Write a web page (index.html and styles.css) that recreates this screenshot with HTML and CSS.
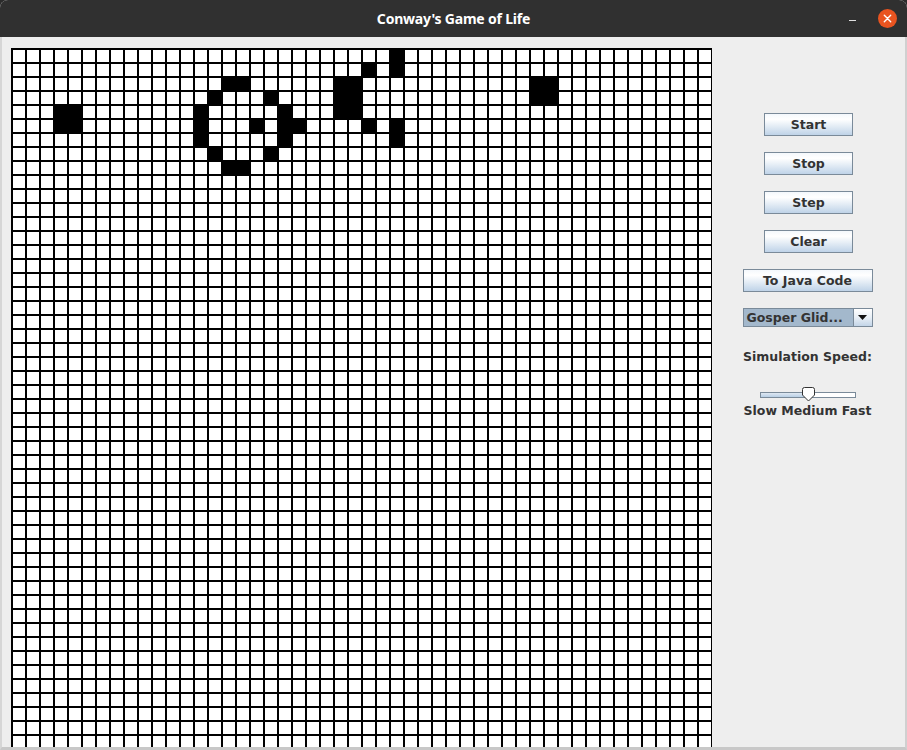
FILE: index.html
```html
<!DOCTYPE html>
<html>
<head>
<meta charset="utf-8">
<link rel="stylesheet" href="styles.css">
</head>
<body>
<div class="window">
  <div class="titlebar">
    <span class="title">Conway's Game of Life</span>
    <div class="controls">
      <span class="minimize"></span>
      <span class="close">
        <svg width="19" height="19" viewBox="0 0 19 19"><circle cx="9.5" cy="9.5" r="9.5" fill="#e95420"/><path d="M6.3 6.3 L12.7 12.7 M12.7 6.3 L6.3 12.7" stroke="#fff" stroke-width="1.4" stroke-linecap="round"/></svg>
      </span>
    </div>
  </div>
  <div class="content">
    <div class="board-wrap">
      <div class="board">
        <div class="cell" style="grid-area:5/4"></div>
        <div class="cell" style="grid-area:5/5"></div>
        <div class="cell" style="grid-area:6/4"></div>
        <div class="cell" style="grid-area:6/5"></div>

        <div class="cell" style="grid-area:5/14"></div>
        <div class="cell" style="grid-area:6/14"></div>
        <div class="cell" style="grid-area:7/14"></div>
        <div class="cell" style="grid-area:4/15"></div>
        <div class="cell" style="grid-area:8/15"></div>
        <div class="cell" style="grid-area:3/16"></div>
        <div class="cell" style="grid-area:9/16"></div>
        <div class="cell" style="grid-area:3/17"></div>
        <div class="cell" style="grid-area:9/17"></div>
        <div class="cell" style="grid-area:6/18"></div>
        <div class="cell" style="grid-area:4/19"></div>
        <div class="cell" style="grid-area:8/19"></div>
        <div class="cell" style="grid-area:5/20"></div>
        <div class="cell" style="grid-area:6/20"></div>
        <div class="cell" style="grid-area:7/20"></div>
        <div class="cell" style="grid-area:6/21"></div>

        <div class="cell" style="grid-area:3/24"></div>
        <div class="cell" style="grid-area:4/24"></div>
        <div class="cell" style="grid-area:5/24"></div>
        <div class="cell" style="grid-area:3/25"></div>
        <div class="cell" style="grid-area:4/25"></div>
        <div class="cell" style="grid-area:5/25"></div>
        <div class="cell" style="grid-area:2/26"></div>
        <div class="cell" style="grid-area:6/26"></div>
        <div class="cell" style="grid-area:1/28"></div>
        <div class="cell" style="grid-area:2/28"></div>
        <div class="cell" style="grid-area:6/28"></div>
        <div class="cell" style="grid-area:7/28"></div>

        <div class="cell" style="grid-area:3/38"></div>
        <div class="cell" style="grid-area:3/39"></div>
        <div class="cell" style="grid-area:4/38"></div>
        <div class="cell" style="grid-area:4/39"></div>
      </div>
    </div>
    <div class="panel">
      <button class="btn">Start</button>
      <button class="btn">Stop</button>
      <button class="btn">Step</button>
      <button class="btn">Clear</button>
      <button class="btn wide">To Java Code</button>
      <div class="combo">
        <span class="combo-text">Gosper Glid...</span>
        <span class="combo-arrow">
          <svg width="9" height="5" viewBox="0 0 9 5"><path d="M0 0 H9 L4.5 5 Z" fill="#111"/></svg>
        </span>
      </div>
      <div class="label speed-label">Simulation Speed:</div>
      <div class="slider">
        <div class="track"><div class="track-fill"></div></div>
        <svg class="thumb" width="15" height="15" viewBox="0 0 15 15"><path d="M1.5 2.5 Q1.5 0.5 3.5 0.5 H11.5 Q13.5 0.5 13.5 2.5 V8 L7.5 14 L1.5 8 Z" fill="#fff" stroke="#333" stroke-width="1"/></svg>
      </div>
      <div class="label ticks">Slow Medium Fast</div>
    </div>
  </div>
</div>
</body>
</html>
```

FILE: styles.css
```css
html, body {
  margin: 0;
  padding: 0;
  background: #2b2b2b;
}
.window {
  width: 907px;
  height: 750px;
  display: flex;
  flex-direction: column;
  overflow: hidden;
  border-radius: 8px 8px 0 0;
  background: #ededed;
}
.titlebar {
  height: 37px;
  flex: none;
  background: #303030;
  display: flex;
  align-items: center;
  justify-content: center;
  position: relative;
}
.title {
  color: #ffffff;
  font-family: "Noto Sans", "DejaVu Sans", sans-serif;
  font-weight: bold;
  font-size: 14px;
  letter-spacing: -0.2px;
}
.controls {
  position: absolute;
  right: 10px;
  top: 9px;
  display: flex;
  align-items: center;
  gap: 22px;
}
.minimize {
  display: block;
  width: 7px;
  height: 1px;
  background: #e0e0e0;
  margin-top: 4px;
}
.close svg {
  display: block;
}
.content {
  flex: 1;
  display: flex;
  border-left: 2px solid #d6d6d6;
  border-right: 2px solid #d0d0d0;
  border-bottom: 3px solid #c8c8c8;
  overflow: hidden;
  background: #eeeeee;
}
.board-wrap {
  padding: 11px 0 0 9px;
  flex: none;
}
.board {
  width: 701px;
  height: 701px;
  display: grid;
  grid-template-columns: repeat(50, 14px);
  grid-template-rows: repeat(50, 14px);
  background-color: #ffffff;
  background-image:
    linear-gradient(to right, #000 2px, transparent 2px),
    linear-gradient(to bottom, #000 2px, transparent 2px);
  background-size: 14px 14px;
}
.cell {
  background: #000;
}
.panel {
  flex: 1;
  display: flex;
  flex-direction: column;
  align-items: center;
  padding-top: 76px;
  padding-right: 2px;
  font-family: "DejaVu Sans", sans-serif;
  font-weight: bold;
  font-size: 12.5px;
  color: #333333;
}
.btn {
  width: 89px;
  height: 23px;
  margin: 0 0 16px 2px;
  padding: 0;
  border: 1px solid #7a8a99;
  background: linear-gradient(to bottom, #f4f8fc 0%, #ffffff 25%, #e6eef6 55%, #bfd3e8 100%);
  font-family: "DejaVu Sans", sans-serif;
  font-weight: bold;
  font-size: 12.5px;
  color: #333333;
  box-sizing: border-box;
}
.btn.wide {
  width: 130px;
  margin-left: 0;
}
.combo {
  width: 130px;
  height: 19px;
  display: flex;
  border: 1px solid #7a8a99;
  box-sizing: border-box;
  background: #a3b8cc;
}
.combo-text {
  flex: 1;
  padding-left: 3px;
  line-height: 17px;
  color: #333333;
  background: #a3b8cc;
  border-right: 1px solid #7a8a99;
}
.combo-arrow {
  width: 18px;
  display: flex;
  align-items: center;
  justify-content: center;
  background: linear-gradient(to bottom, #ffffff 0%, #e8eff6 50%, #c3d5e8 100%);
}
.label {
  white-space: nowrap;
}
.speed-label {
  margin-top: 22px;
  line-height: 16px;
}
.slider {
  position: relative;
  width: 96px;
  height: 15px;
  margin-top: 22px;
}
.track {
  position: absolute;
  left: 0;
  top: 5px;
  width: 96px;
  height: 6px;
  box-sizing: border-box;
  border: 1px solid #7a8a99;
  background: #ffffff;
}
.track-fill {
  width: 48px;
  height: 100%;
  background: linear-gradient(to bottom, #dfe8f2, #b8cfe5);
}
.thumb {
  position: absolute;
  left: 41px;
  top: 0;
}
.ticks {
  margin-top: 2px;
  line-height: 14px;
}
```
